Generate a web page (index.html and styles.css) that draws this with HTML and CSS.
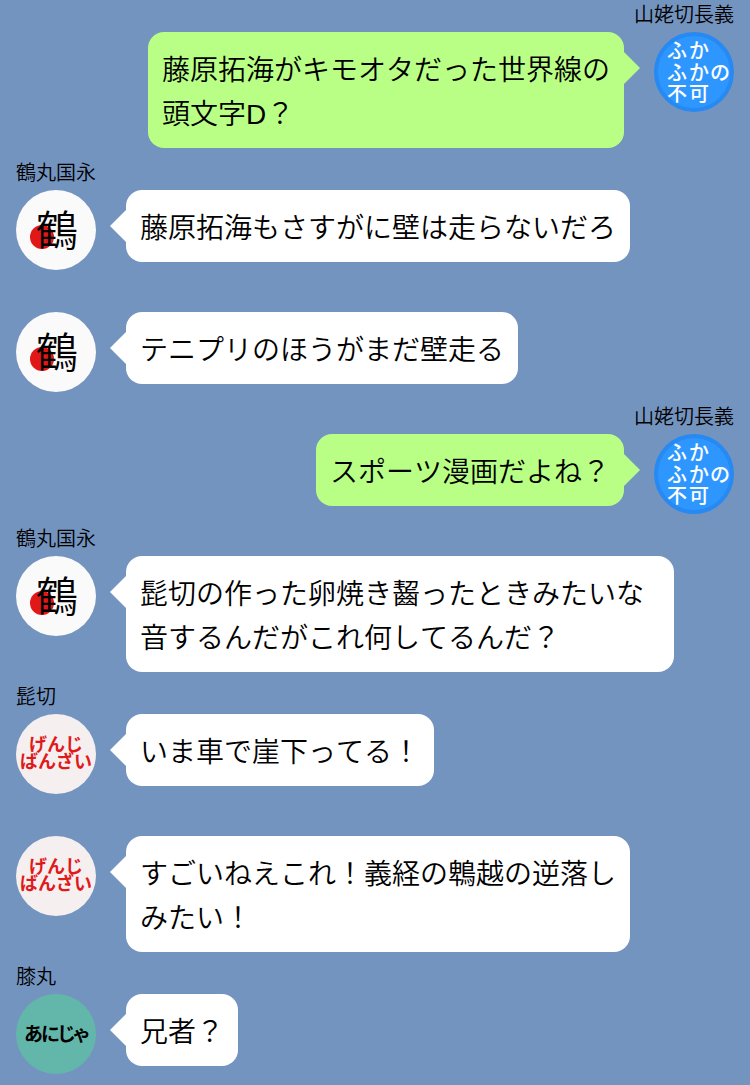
FILE: index.html
```
<!DOCTYPE html>
<html lang="ja">
<head>
    <meta charset="UTF-8">
    <meta name="viewport" content="width=device-width, initial-scale=1.0">
    <title>トーク</title>
    <link rel="stylesheet" href="styles.css">
</head>
<body>

    <!-- avatars, reused by each message -->
    <svg class="defs" aria-hidden="true">
        <symbol id="avatar-chougi" viewBox="0 0 80 80">
            <circle cx="40" cy="40" r="38" fill="#2e97ff" stroke="#2789f2" stroke-width="4"/>
            <g fill="#fff" font-size="20" font-weight="500">
                <text x="13 35" y="26">ふか</text>
                <text x="13 35 56" y="48">ふかの</text>
                <text x="13 35" y="69">不可</text>
            </g>
        </symbol>
        <symbol id="avatar-tsuru" viewBox="0 0 80 80">
            <circle cx="40" cy="40" r="40" fill="#fafafa"/>
            <circle cx="26" cy="47" r="12" fill="#e01818"/>
            <text x="41" y="56" font-size="42" font-weight="350" text-anchor="middle">鶴</text>
        </symbol>
        <symbol id="avatar-higekiri" viewBox="0 0 80 80">
            <circle cx="40" cy="40" r="40" fill="#f5eff0"/>
            <g fill="#e01a1a" font-size="18" font-weight="700" text-anchor="middle">
                <text x="40" y="37">げんじ</text>
                <text x="40" y="54">ばんざい</text>
            </g>
        </symbol>
        <symbol id="avatar-hizamaru" viewBox="0 0 80 80">
            <circle cx="40" cy="40" r="40" fill="#62b7aa"/>
            <text x="8 25 41 56" y="47" font-size="19" font-weight="700">あにじゃ</text>
        </symbol>
    </svg>

    <main class="chat">

        <div class="message me">
            <div class="name">山姥切長義</div>
            <div class="row">
                <svg class="avatar"><use href="#avatar-chougi"/></svg>
                <p class="bubble">藤原拓海がキモオタだった世界線の<br>頭文字<span class="latin">D</span>？</p>
            </div>
        </div>

        <div class="message">
            <div class="name">鶴丸国永</div>
            <div class="row">
                <svg class="avatar"><use href="#avatar-tsuru"/></svg>
                <p class="bubble">藤原拓海もさすがに壁は走らないだろ</p>
            </div>
        </div>

        <div class="message">
            <div class="name"></div>
            <div class="row">
                <svg class="avatar"><use href="#avatar-tsuru"/></svg>
                <p class="bubble">テニプリのほうがまだ壁走る</p>
            </div>
        </div>

        <div class="message me">
            <div class="name">山姥切長義</div>
            <div class="row">
                <svg class="avatar"><use href="#avatar-chougi"/></svg>
                <p class="bubble">スポーツ漫画だよね？</p>
            </div>
        </div>

        <div class="message">
            <div class="name">鶴丸国永</div>
            <div class="row">
                <svg class="avatar"><use href="#avatar-tsuru"/></svg>
                <p class="bubble">髭切の作った卵焼き齧ったときみたいな音するんだがこれ何してるんだ？</p>
            </div>
        </div>

        <div class="message">
            <div class="name">髭切</div>
            <div class="row">
                <svg class="avatar"><use href="#avatar-higekiri"/></svg>
                <p class="bubble">いま車で崖下ってる！</p>
            </div>
        </div>

        <div class="message">
            <div class="name"></div>
            <div class="row">
                <svg class="avatar"><use href="#avatar-higekiri"/></svg>
                <p class="bubble">すごいねえこれ！義経の鵯越の逆落し<br>みたい！</p>
            </div>
        </div>

        <div class="message">
            <div class="name">膝丸</div>
            <div class="row">
                <svg class="avatar"><use href="#avatar-hizamaru"/></svg>
                <p class="bubble">兄者？</p>
            </div>
        </div>

    </main>

</body>
</html>
```

FILE: styles.css
```
* {
    box-sizing: border-box;
}
body {
    margin: 0;
    background: #7494c0;
    color: #000;
    font-family: "Noto Sans CJK JP", sans-serif;
    font-weight: 350;
    font-kerning: none;
}
.defs {
    display: none;
}
.chat {
    display: flex;
    flex-direction: column;
    gap: 10px;
    padding: 0 16px 10px;
}
.name {
    height: 28px;
    margin-bottom: 4px;
    font-size: 20px;
    line-height: 28px;
}
.row {
    display: flex;
    align-items: flex-start;
    gap: 30px;
}
.avatar {
    flex: none;
    width: 80px;
    height: 80px;
}
.bubble {
    position: relative;
    max-width: 548px;
    margin: 0;
    padding: 14px;
    border-radius: 16px;
    background: #fff;
    font-size: 28px;
    line-height: 44px;
}
/* bubble tail */
.bubble::before {
    content: "";
    position: absolute;
    top: 20px;
    right: 100%;
    border: 16px solid transparent;
    border-left-width: 0;
    border-right-color: #fff;
}
.latin {
    font-family: "Liberation Sans", Arial, sans-serif;
    line-height: 1;
}

/* own messages sit on the right */
.me .name {
    text-align: right;
}
.me .row {
    flex-direction: row-reverse;
}
.me .bubble {
    background: #b9ff85;
}
.me .bubble::before {
    right: auto;
    left: 100%;
    border-left: 16px solid #b9ff85;
    border-right-width: 0;
}
```
